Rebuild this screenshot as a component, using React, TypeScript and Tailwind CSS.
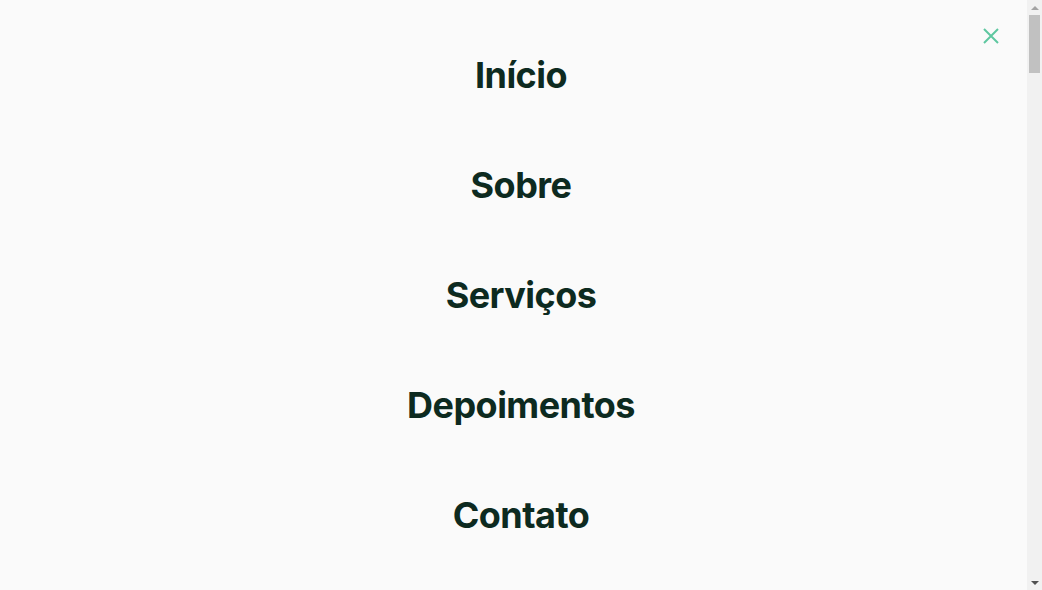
const LINKS = ['Início', 'Sobre', 'Serviços', 'Depoimentos', 'Contato'];

export default function App() {
  return (
    <div className="relative w-screen h-screen overflow-hidden bg-[#fafafa]" style={{ fontFamily: 'Inter, "Noto Sans", sans-serif' }}>
      {/* close */}
      <button className="absolute top-[28px] left-[983px] text-[#5ec7a0]">
        <svg width="16" height="16" viewBox="0 0 16 16" fill="none" stroke="currentColor" strokeWidth="2">
          <path d="M1 1L15 15M15 1L1 15" />
        </svg>
      </button>

      <nav className="flex flex-col items-center gap-[70px] pt-[55px]">
        {LINKS.map((l) => (
          <a key={l} href="#" className="text-4xl font-bold text-[#0d2a20] tracking-[-0.015em]">
            {l}
          </a>
        ))}
      </nav>

      {/* page scrollbar */}
      <div className="absolute top-0 right-0 w-[15px] h-full bg-[#f1f1f1] flex flex-col items-center">
        <div className="h-[15px] flex items-center justify-center">
          <div className="w-0 h-0 border-l-[4px] border-r-[4px] border-b-[4px] border-l-transparent border-r-transparent border-b-[#a3a3a3]" />
        </div>
        <div className="w-[11px] h-[58px] bg-[#c1c1c1]" />
        <div className="flex-1" />
        <div className="h-[15px] flex items-center justify-center">
          <div className="w-0 h-0 border-l-[4px] border-r-[4px] border-t-[4px] border-l-transparent border-r-transparent border-t-[#505050]" />
        </div>
      </div>
    </div>
  );
}
